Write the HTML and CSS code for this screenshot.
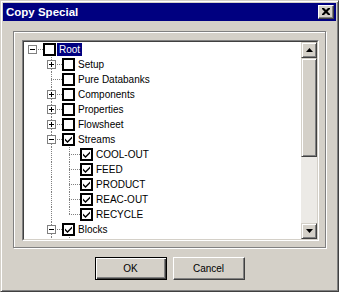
FILE: index.html
```html
<!DOCTYPE html>
<html>
<head>
<meta charset="utf-8">
<link rel="stylesheet" href="styles.css">
</head>
<body>
<div class="window">
  <div class="titlebar">
    <span class="title">Copy Special</span>
    <span class="close"><svg width="8" height="7" viewBox="0 0 8 7"><path d="M0 0h2l2 2 2-2h2v1L5.5 3.5 8 6v1H6L4 5 2 7H0V6l2.5-2.5L0 1z" fill="#000"/></svg></span>
  </div>
  <div class="body">
    <div class="group">
      <div class="tree">
        <div class="tree-inner">
          <div class="tree-list">
            <div class="row">
              <span class="cell h"><svg class="exp" width="9" height="9" viewBox="0 0 9 9"><rect x=".5" y=".5" width="8" height="8" fill="#fff" stroke="#808080"/><path d="M2 4.5h5" stroke="#000"/></svg></span>
              <span class="cb"></span><span class="label sel">Root</span>
            </div>
            <div class="row">
              <span class="cell"></span>
              <span class="cell t"><svg class="exp" width="9" height="9" viewBox="0 0 9 9"><rect x=".5" y=".5" width="8" height="8" fill="#fff" stroke="#808080"/><path d="M2 4.5h5M4.5 2v5" stroke="#000"/></svg></span>
              <span class="cb"></span><span class="label">Setup</span>
            </div>
            <div class="row">
              <span class="cell"></span>
              <span class="cell t"></span>
              <span class="cb"></span><span class="label">Pure Databanks</span>
            </div>
            <div class="row">
              <span class="cell"></span>
              <span class="cell t"><svg class="exp" width="9" height="9" viewBox="0 0 9 9"><rect x=".5" y=".5" width="8" height="8" fill="#fff" stroke="#808080"/><path d="M2 4.5h5M4.5 2v5" stroke="#000"/></svg></span>
              <span class="cb"></span><span class="label">Components</span>
            </div>
            <div class="row">
              <span class="cell"></span>
              <span class="cell t"><svg class="exp" width="9" height="9" viewBox="0 0 9 9"><rect x=".5" y=".5" width="8" height="8" fill="#fff" stroke="#808080"/><path d="M2 4.5h5M4.5 2v5" stroke="#000"/></svg></span>
              <span class="cb"></span><span class="label">Properties</span>
            </div>
            <div class="row">
              <span class="cell"></span>
              <span class="cell t"><svg class="exp" width="9" height="9" viewBox="0 0 9 9"><rect x=".5" y=".5" width="8" height="8" fill="#fff" stroke="#808080"/><path d="M2 4.5h5M4.5 2v5" stroke="#000"/></svg></span>
              <span class="cb"></span><span class="label">Flowsheet</span>
            </div>
            <div class="row">
              <span class="cell"></span>
              <span class="cell t"><svg class="exp" width="9" height="9" viewBox="0 0 9 9"><rect x=".5" y=".5" width="8" height="8" fill="#fff" stroke="#808080"/><path d="M2 4.5h5" stroke="#000"/></svg></span>
              <span class="cb on"><svg width="9" height="9" viewBox="0 0 9 9"><path d="M1 3.5l2.5 2.5 4.5-4.5v2l-4.5 4.5-2.5-2.5z" fill="#000"/></svg></span><span class="label">Streams</span>
            </div>
            <div class="row">
              <span class="cell"></span><span class="cell v"></span><span class="cell t"></span>
              <span class="cb on"><svg width="9" height="9" viewBox="0 0 9 9"><path d="M1 3.5l2.5 2.5 4.5-4.5v2l-4.5 4.5-2.5-2.5z" fill="#000"/></svg></span><span class="label">COOL-OUT</span>
            </div>
            <div class="row">
              <span class="cell"></span><span class="cell v"></span><span class="cell t"></span>
              <span class="cb on"><svg width="9" height="9" viewBox="0 0 9 9"><path d="M1 3.5l2.5 2.5 4.5-4.5v2l-4.5 4.5-2.5-2.5z" fill="#000"/></svg></span><span class="label">FEED</span>
            </div>
            <div class="row">
              <span class="cell"></span><span class="cell v"></span><span class="cell t"></span>
              <span class="cb on"><svg width="9" height="9" viewBox="0 0 9 9"><path d="M1 3.5l2.5 2.5 4.5-4.5v2l-4.5 4.5-2.5-2.5z" fill="#000"/></svg></span><span class="label">PRODUCT</span>
            </div>
            <div class="row">
              <span class="cell"></span><span class="cell v"></span><span class="cell t"></span>
              <span class="cb on"><svg width="9" height="9" viewBox="0 0 9 9"><path d="M1 3.5l2.5 2.5 4.5-4.5v2l-4.5 4.5-2.5-2.5z" fill="#000"/></svg></span><span class="label">REAC-OUT</span>
            </div>
            <div class="row">
              <span class="cell"></span><span class="cell v"></span><span class="cell l"></span>
              <span class="cb on"><svg width="9" height="9" viewBox="0 0 9 9"><path d="M1 3.5l2.5 2.5 4.5-4.5v2l-4.5 4.5-2.5-2.5z" fill="#000"/></svg></span><span class="label">RECYCLE</span>
            </div>
            <div class="row">
              <span class="cell"></span>
              <span class="cell t"><svg class="exp" width="9" height="9" viewBox="0 0 9 9"><rect x=".5" y=".5" width="8" height="8" fill="#fff" stroke="#808080"/><path d="M2 4.5h5" stroke="#000"/></svg></span>
              <span class="cb on"><svg width="9" height="9" viewBox="0 0 9 9"><path d="M1 3.5l2.5 2.5 4.5-4.5v2l-4.5 4.5-2.5-2.5z" fill="#000"/></svg></span><span class="label">Blocks</span>
            </div>
            <div class="row">
              <span class="cell"></span><span class="cell v"></span><span class="cell t"></span>
            </div>
          </div>
          <div class="scrollbar">
            <span class="sb-btn"><svg width="7" height="4" viewBox="0 0 7 4"><path d="M3.5 0L7 4H0z" fill="#000"/></svg></span>
            <div class="sb-track"><div class="sb-thumb"></div></div>
            <span class="sb-btn"><svg width="7" height="4" viewBox="0 0 7 4"><path d="M0 0h7L3.5 4z" fill="#000"/></svg></span>
          </div>
        </div>
      </div>
    </div>
    <div class="buttons">
      <button class="btn default">OK</button>
      <button class="btn">Cancel</button>
    </div>
  </div>
</div>
</body>
</html>
```
FILE: styles.css
```css
html, body {
  margin: 0;
  padding: 0;
  background: #d4d0c8;
}
body {
  font-family: "Liberation Sans", Arial, sans-serif;
  font-size: 10px;
  color: #000;
}
.window {
  width: 339px;
  height: 292px;
  box-sizing: border-box;
  background: #d4d0c8;
  border: 1px solid;
  border-color: #d4d0c8 #404040 #404040 #d4d0c8;
  box-shadow: inset 1px 1px #fff, inset -1px -1px #808080;
  padding: 2px;
  display: flex;
  flex-direction: column;
}
.titlebar {
  height: 18px;
  background: #000080;
  display: flex;
  align-items: center;
  justify-content: space-between;
  padding: 0 2px 0 2px;
}
.title {
  color: #fff;
  font-weight: bold;
  font-size: 11.5px;
  padding-left: 1px;
}
.close {
  width: 16px;
  height: 14px;
  box-sizing: border-box;
  background: #d4d0c8;
  border: 1px solid;
  border-color: #fff #404040 #404040 #fff;
  box-shadow: inset -1px -1px #808080;
  display: flex;
  align-items: center;
  justify-content: center;
  padding: 0 1px 1px 0;
}
.close svg { display: block; }
.body {
  padding: 10px 10px 0 10px;
  display: flex;
  flex-direction: column;
}
.group {
  border: 1px solid #808080;
  box-shadow: inset 1px 1px #fff, 1px 1px #fff;
  padding: 8px 6px 6px 8px;
  height: 217px;
  box-sizing: border-box;
}
.tree {
  height: 201px;
  box-sizing: border-box;
  border: 1px solid;
  border-color: #808080 #fff #fff #808080;
}
.tree-inner {
  height: 100%;
  box-sizing: border-box;
  border: 1px solid;
  border-color: #404040 #d4d0c8 #d4d0c8 #404040;
  background: #fff;
  display: flex;
  overflow: hidden;
}
.tree-list {
  flex: 1;
  overflow: hidden;
}
.row {
  height: 15px;
  display: flex;
  align-items: center;
}
.cell {
  flex: none;
  width: 19px;
  height: 15px;
  box-sizing: border-box;
  padding-left: 4px;
  display: flex;
  align-items: center;
  background-repeat: no-repeat;
}
.cell.v { width: 18px; }
.exp { display: block; }
.h {
  background-image: repeating-linear-gradient(to right, #808080 0 1px, transparent 1px 2px);
  background-size: 11px 1px;
  background-position: 8px 7px;
}
.v {
  background-image: repeating-linear-gradient(to bottom, #808080 0 1px, transparent 1px 2px);
  background-size: 1px 15px;
  background-position: 8px 0;
}
.t {
  background-image: repeating-linear-gradient(to bottom, #808080 0 1px, transparent 1px 2px),
                    repeating-linear-gradient(to right, #808080 0 1px, transparent 1px 2px);
  background-size: 1px 15px, 11px 1px;
  background-position: 8px 0, 8px 7px;
}
.l {
  background-image: repeating-linear-gradient(to bottom, #808080 0 1px, transparent 1px 2px),
                    repeating-linear-gradient(to right, #808080 0 1px, transparent 1px 2px);
  background-size: 1px 8px, 11px 1px;
  background-position: 8px 0, 8px 7px;
}
.cb {
  flex: none;
  width: 13px;
  height: 13px;
  box-sizing: border-box;
  border: 2px solid #000;
  background: #fff;
  display: flex;
  align-items: center;
  justify-content: center;
}
.cb svg { display: block; }
.label {
  margin-left: 1px;
  padding: 0 2px;
  height: 13px;
  line-height: 13px;
  white-space: nowrap;
}
.sel {
  background: #000080;
  color: #fff;
}
.scrollbar {
  flex: none;
  width: 16px;
  display: flex;
  flex-direction: column;
}
.sb-btn {
  flex: none;
  height: 16px;
  box-sizing: border-box;
  background: #d4d0c8;
  border: 1px solid;
  border-color: #d4d0c8 #404040 #404040 #d4d0c8;
  box-shadow: inset 1px 1px #fff, inset -1px -1px #808080;
  display: flex;
  align-items: center;
  justify-content: center;
}
.sb-btn svg { display: block; }
.sb-track {
  flex: 1;
  background: #eceae6;
}
.sb-thumb {
  height: 99px;
  box-sizing: border-box;
  background: #d4d0c8;
  border: 1px solid;
  border-color: #d4d0c8 #404040 #404040 #d4d0c8;
  box-shadow: inset 1px 1px #fff, inset -1px -1px #808080;
}
.buttons {
  margin-top: 9px;
  display: flex;
  justify-content: center;
  gap: 6px;
}
.btn {
  width: 72px;
  height: 23px;
  box-sizing: border-box;
  margin: 0;
  padding: 0;
  font-family: "Liberation Sans", Arial, sans-serif;
  font-size: 10px;
  color: #000;
  background: #d4d0c8;
  border: 1px solid;
  border-color: #fff #404040 #404040 #fff;
  box-shadow: inset -1px -1px #808080;
}
.btn.default {
  border: 1px solid #000;
  box-shadow: inset 1px 1px #fff, inset -1px -1px #404040, inset -2px -2px #808080;
}
```
